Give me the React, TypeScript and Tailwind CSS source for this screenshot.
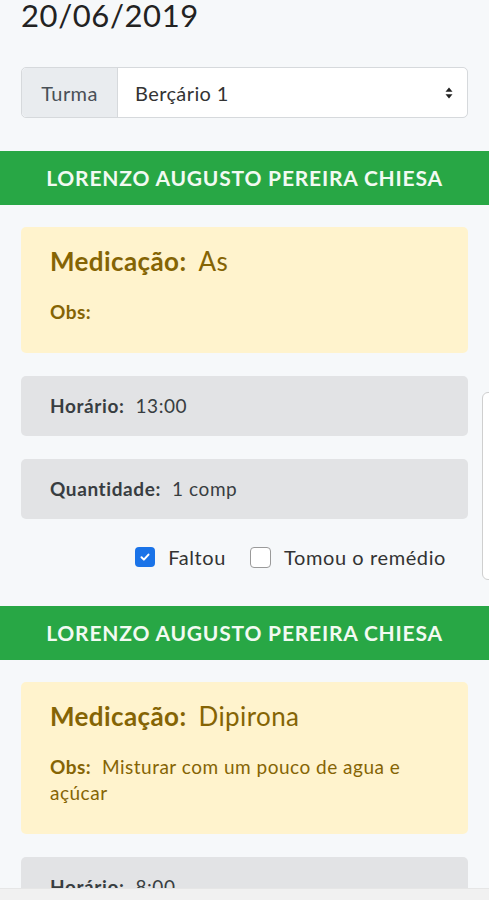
import React from 'react';

interface Medicacao {
  aluno: string;
  nome: string;
  obs: string;
  horario: string;
  quantidade: string;
  faltou: boolean;
  tomou: boolean;
}

const itens: Medicacao[] = [
  {
    aluno: 'LORENZO AUGUSTO PEREIRA CHIESA',
    nome: 'As',
    obs: '',
    horario: '13:00',
    quantidade: '1 comp',
    faltou: true,
    tomou: false,
  },
  {
    aluno: 'LORENZO AUGUSTO PEREIRA CHIESA',
    nome: 'Dipirona',
    obs: 'Misturar com um pouco de agua e açúcar',
    horario: '8:00',
    quantidade: '1 comp',
    faltou: false,
    tomou: false,
  },
];

function Checkbox({ checked, label }: { checked: boolean; label: string }) {
  return (
    <label className="flex items-center gap-[13px]">
      {checked ? (
        <span className="flex h-[20px] w-[20px] items-center justify-center rounded-[4px] bg-[#1a73e8]">
          <svg className="h-[12px] w-[12px]" viewBox="0 0 12 12" fill="none" stroke="white" strokeWidth="2" strokeLinecap="round" strokeLinejoin="round">
            <path d="M2.5 6.2l2.4 2.4 4.6-5" />
          </svg>
        </span>
      ) : (
        <span className="h-[21px] w-[21px] rounded-[4px] border border-[#9a9a9a] bg-white" />
      )}
      <span>{label}</span>
    </label>
  );
}

function Card({ item }: { item: Medicacao }) {
  return (
    <div>
      {/* Aluno header */}
      <div className="flex h-[54px] items-center justify-center bg-[#28a745] text-[21px] font-bold tracking-[0.8px] text-[#f2faf2]">
        {item.aluno}
      </div>

      <div className="px-[21px] pt-[22px]">
        {/* Medicação */}
        <div className="rounded-[5px] bg-[#fff3cd] pb-[28px] pl-[29px] pr-[24px] pt-[19px] text-[#856404]">
          <div className="text-[26px] leading-[30px] tracking-[0.4px]">
            <span className="font-bold">Medicação:</span>
            <span className="ml-[12px]">{item.nome}</span>
          </div>
          <p className="mt-[23px] text-[19px] leading-[26px] tracking-[0.5px]">
            <b>Obs:</b> &nbsp;{item.obs}
          </p>
        </div>

        {/* Horário */}
        <div className="mt-[23px] rounded-[5px] bg-[#e2e3e5] px-[29px] py-[18px] text-[19px] leading-[24px] tracking-[0.6px] text-[#383d41]">
          <span className="font-bold">Horário:</span>
          <span className="ml-[11px]">{item.horario}</span>
        </div>

        {/* Quantidade */}
        <div className="mt-[23px] rounded-[5px] bg-[#e2e3e5] px-[29px] py-[18px] text-[19px] leading-[24px] tracking-[0.6px] text-[#383d41]">
          <span className="font-bold">Quantidade:</span>
          <span className="ml-[11px]">{item.quantidade}</span>
        </div>

        <div className="flex h-[87px] items-start justify-end gap-[24px] pr-[22px] pt-[27px] text-[20px] leading-[22px] tracking-[0.6px] text-[#333]">
          <Checkbox checked={item.faltou} label="Faltou" />
          <Checkbox checked={item.tomou} label="Tomou o remédio" />
        </div>
      </div>
    </div>
  );
}

export default function App() {
  return (
    <div className="relative h-[900px] overflow-hidden bg-[#f6f8fa] font-['Lato','Liberation_Sans',sans-serif]">
      <div className="px-[21px]">
        <h1 className="text-[31px] leading-[30px] tracking-[0.6px] text-[#222]">20/06/2019</h1>

        {/* Turma select */}
        <div className="mt-[37px] flex h-[51px] rounded-[5px] border border-[#d6d9dc] text-[20px] tracking-[0.4px]">
          <div className="flex w-[96px] items-center justify-center rounded-l-[5px] border-r border-[#d6d9dc] bg-[#e9ecef] text-[#495057]">
            Turma
          </div>
          <div className="flex flex-1 items-center justify-between rounded-r-[5px] bg-white pl-[17px] pr-[14px] text-[#333]">
            <span>Berçário 1</span>
            <svg className="h-[12px] w-[8px]" viewBox="0 0 8 12" fill="#222">
              <path d="M4 0.5L7.5 4.8H0.5z" />
              <path d="M4 11.5L7.5 7.2H0.5z" />
            </svg>
          </div>
        </div>
      </div>

      <div className="mt-[33px]">
        {itens.map((item, i) => (
          <Card key={i} item={item} />
        ))}
      </div>

      {/* partially visible panel at right edge */}
      <div className="absolute left-[482px] top-[392px] h-[188px] w-[40px] rounded-[6px] border border-[#cfcfcf] bg-white" />

      {/* bottom browser bar */}
      <div className="absolute bottom-0 left-0 h-[12px] w-full border-t border-[#e6e6e6] bg-[#f1f1f1]" />
    </div>
  );
}
